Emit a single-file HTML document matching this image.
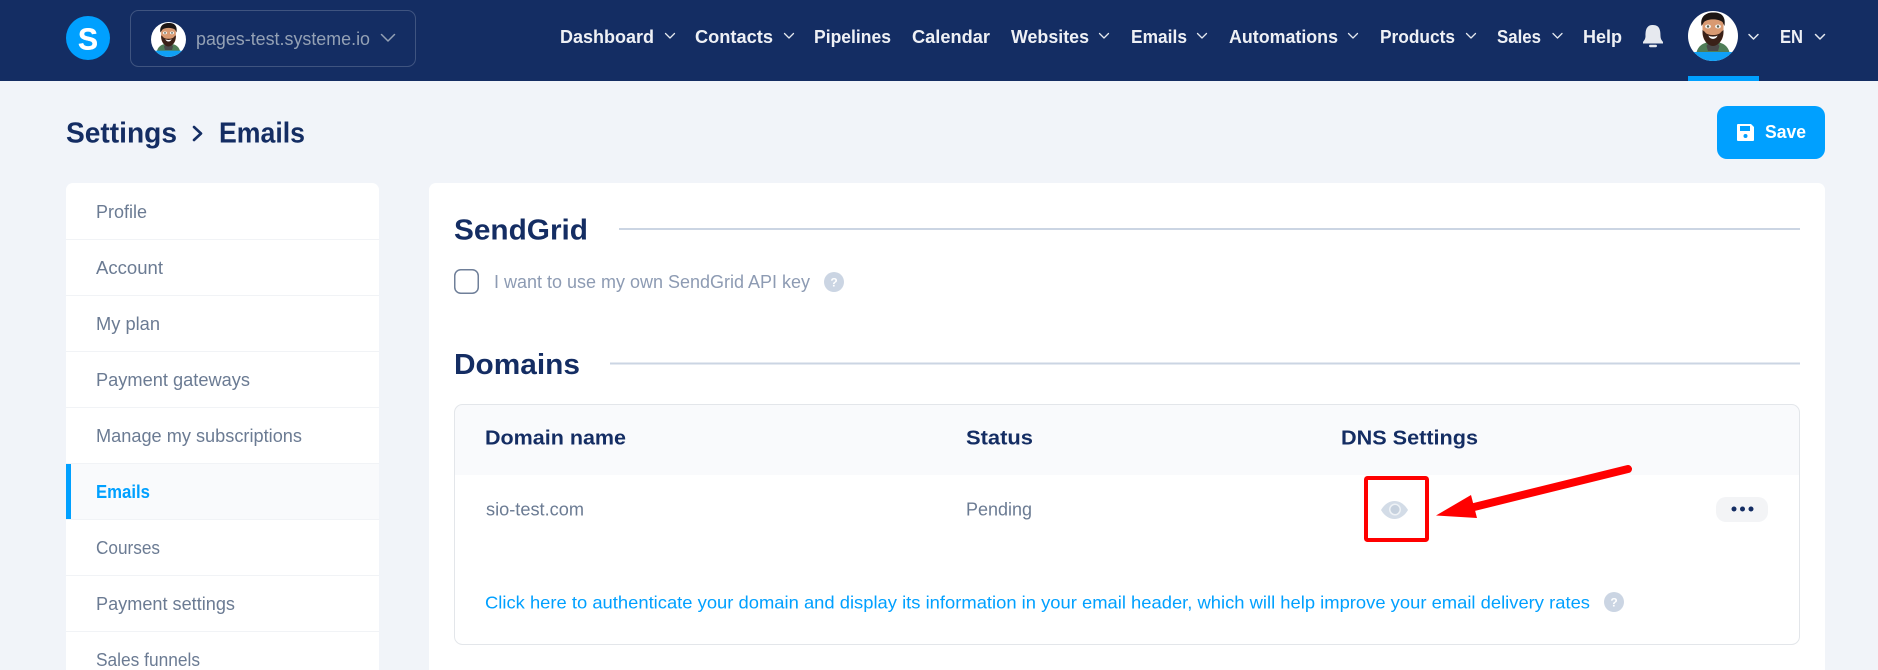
<!DOCTYPE html>
<html lang="en">
<head>
<meta charset="utf-8">
<title>Settings - Emails</title>
<style>
html,body{margin:0;padding:0;width:1878px;height:670px;overflow:hidden;background:#f1f4f9}
svg{display:block}
text{font-family:"Liberation Sans",sans-serif}
.nav{font-size:18px;font-weight:700;fill:#eef0f5}
.side{font-size:18px;fill:#6b7b93}
.h2{font-size:29px;font-weight:700;fill:#142d63}
.th{font-size:20px;font-weight:700;fill:#142d63}
.td{font-size:18px;fill:#6b7b93}
.chev{fill:none;stroke:#e4e8ef;stroke-width:1.300;stroke-linecap:round;stroke-linejoin:round}
</style>
</head>
<body>
<svg width="1878" height="670" viewBox="0 0 1878 670" xmlns="http://www.w3.org/2000/svg">
<defs>
<clipPath id="av"><circle cx="50" cy="50" r="50"/></clipPath>
<symbol id="avatar" viewBox="0 0 100 100">
<g clip-path="url(#av)">
<rect width="100" height="100" fill="#fff"/>
<path d="M16 88 C18 70 30 64 42 62 L58 62 C70 64 82 70 84 88 Z" fill="#4f7d57"/>
<rect x="0" y="82" width="100" height="18" fill="#0fa0f5"/>
<path d="M37 70 C42 60 58 60 63 70 L60 80 L40 80 Z" fill="#4a4a4a"/>
<path d="M29 20 C29 6 71 6 71 20 L71 42 C71 60 60 68 50 68 C40 68 29 60 29 42 Z" fill="#d99a72"/>
<path d="M29 38 L34 42 C38 50 62 50 66 42 L71 38 C72 58 60 70 50 70 C40 70 28 58 29 38 Z" fill="#3a2118"/>
<path d="M27 30 C23 8 40 2 52 3 C66 3 76 10 73 30 L69 22 C60 15 40 15 32 22 Z" fill="#1d1614"/>
<ellipse cx="40" cy="31" rx="6" ry="4" fill="#f3f3f0"/>
<ellipse cx="60" cy="31" rx="6" ry="4" fill="#f3f3f0"/>
<circle cx="40" cy="31" r="2.400" fill="#5a6050"/>
<circle cx="60" cy="31" r="2.400" fill="#5a6050"/>
<path d="M41 49 C45 52 55 52 59 49 C57 58 43 58 41 49 Z" fill="#fff"/>
</g>
</symbol>
</defs>

<!-- page -->
<rect width="1878" height="670" fill="#f1f4f9"/>

<!-- top bar -->
<rect width="1878" height="81" fill="#142d63"/>
<circle cx="88" cy="38" r="22" fill="#00a0ff"/>
<text x="78" y="49.500" font-size="31" font-weight="700" fill="#fff" stroke="#fff" stroke-width="0.400" textLength="20" lengthAdjust="spacingAndGlyphs">S</text>

<rect x="130.500" y="10.500" width="285" height="56" rx="8" fill="none" stroke="#3f5480" stroke-width="1"/>
<use href="#avatar" x="151" y="22" width="35" height="35"/>
<text x="196" y="45" font-size="18" fill="#94a1b5" textLength="174" lengthAdjust="spacingAndGlyphs">pages-test.systeme.io</text>
<polyline points="381.500,34.500 388,41 394.500,34.500" fill="none" stroke="#94a1b5" stroke-width="1.500" stroke-linecap="round" stroke-linejoin="round"/>

<text class="nav" x="560" y="43" textLength="94" lengthAdjust="spacingAndGlyphs">Dashboard</text>
<polyline class="chev" points="665.500,33.500 670,38 674.500,33.500"/>
<text class="nav" x="695" y="43" textLength="78" lengthAdjust="spacingAndGlyphs">Contacts</text>
<polyline class="chev" points="784.500,33.500 789,38 793.500,33.500"/>
<text class="nav" x="814" y="43" textLength="77" lengthAdjust="spacingAndGlyphs">Pipelines</text>
<text class="nav" x="912" y="43" textLength="78" lengthAdjust="spacingAndGlyphs">Calendar</text>
<text class="nav" x="1011" y="43" textLength="78" lengthAdjust="spacingAndGlyphs">Websites</text>
<polyline class="chev" points="1099.500,33.500 1104,38 1108.500,33.500"/>
<text class="nav" x="1131" y="43" textLength="56" lengthAdjust="spacingAndGlyphs">Emails</text>
<polyline class="chev" points="1197.500,33.500 1202,38 1206.500,33.500"/>
<text class="nav" x="1229" y="43" textLength="109" lengthAdjust="spacingAndGlyphs">Automations</text>
<polyline class="chev" points="1348.500,33.500 1353,38 1357.500,33.500"/>
<text class="nav" x="1380" y="43" textLength="75" lengthAdjust="spacingAndGlyphs">Products</text>
<polyline class="chev" points="1466.500,33.500 1471,38 1475.500,33.500"/>
<text class="nav" x="1497" y="43" textLength="44" lengthAdjust="spacingAndGlyphs">Sales</text>
<polyline class="chev" points="1553,33.500 1557.500,38 1562,33.500"/>
<text class="nav" x="1583" y="43" textLength="39" lengthAdjust="spacingAndGlyphs">Help</text>

<path d="M1653 25 C1646 25 1645.500 31 1645.500 36 C1645.500 39 1644 40.500 1643 42 L1643 43.500 L1663 43.500 L1663 42 C1662 40.500 1660.500 39 1660.500 36 C1660.500 31 1660 25 1653 25 Z" fill="#e6e9ef"/>
<rect x="1649" y="44.800" width="8" height="2.400" rx="1.200" fill="#e6e9ef"/>

<use href="#avatar" x="1688" y="11" width="50" height="50"/>
<polyline class="chev" points="1749,34.500 1753.500,39 1758,34.500" style="stroke-width:1.500"/>
<text class="nav" x="1780" y="43" textLength="23" lengthAdjust="spacingAndGlyphs">EN</text>
<polyline class="chev" points="1815.500,34.500 1820,39 1824.500,34.500" style="stroke-width:1.500"/>
<rect x="1688" y="76" width="71" height="5" fill="#00a0ff"/>

<!-- page title -->
<text x="66" y="142.500" font-size="29" font-weight="700" fill="#142d63" textLength="111" lengthAdjust="spacingAndGlyphs">Settings</text>
<polyline points="194,127 201,133.500 194,140" fill="none" stroke="#142d63" stroke-width="2.600" stroke-linecap="round" stroke-linejoin="round"/>
<text x="219" y="142.500" font-size="29" font-weight="700" fill="#142d63" textLength="86" lengthAdjust="spacingAndGlyphs">Emails</text>

<!-- save -->
<rect x="1717" y="106" width="108" height="53" rx="10" fill="#00a0ff"/>
<path d="M1738 124 L1751 124 L1754 127 L1754 140 Q1754 141 1753 141 L1738 141 Q1737 141 1737 140 L1737 125 Q1737 124 1738 124 Z" fill="#fff"/>
<rect x="1740" y="126" width="10" height="5" fill="#00a0ff"/>
<circle cx="1745.500" cy="136" r="2" fill="#00a0ff"/>
<text x="1765" y="138" font-size="18" font-weight="700" fill="#fff" textLength="41" lengthAdjust="spacingAndGlyphs">Save</text>

<!-- sidebar -->
<rect x="66" y="183" width="313" height="520" rx="7" fill="#fff"/>
<rect x="66" y="463" width="313" height="56" fill="#f9fafc"/>
<rect x="66" y="464" width="5" height="55" fill="#00a0ff"/>
<g fill="#f1f3f6">
<rect x="66" y="239" width="313" height="1"/>
<rect x="66" y="295" width="313" height="1"/>
<rect x="66" y="351" width="313" height="1"/>
<rect x="66" y="407" width="313" height="1"/>
<rect x="66" y="463" width="313" height="1"/>
<rect x="66" y="519" width="313" height="1"/>
<rect x="66" y="575" width="313" height="1"/>
<rect x="66" y="631" width="313" height="1"/>
</g>
<text class="side" x="96" y="218" textLength="51" lengthAdjust="spacingAndGlyphs">Profile</text>
<text class="side" x="96" y="274" textLength="67" lengthAdjust="spacingAndGlyphs">Account</text>
<text class="side" x="96" y="330" textLength="64" lengthAdjust="spacingAndGlyphs">My plan</text>
<text class="side" x="96" y="386" textLength="154" lengthAdjust="spacingAndGlyphs">Payment gateways</text>
<text class="side" x="96" y="442" textLength="206" lengthAdjust="spacingAndGlyphs">Manage my subscriptions</text>
<text x="96" y="498" font-size="18" font-weight="700" fill="#00a0ff" textLength="54" lengthAdjust="spacingAndGlyphs">Emails</text>
<text class="side" x="96" y="554" textLength="64" lengthAdjust="spacingAndGlyphs">Courses</text>
<text class="side" x="96" y="610" textLength="139" lengthAdjust="spacingAndGlyphs">Payment settings</text>
<text class="side" x="96" y="666" textLength="104" lengthAdjust="spacingAndGlyphs">Sales funnels</text>

<!-- main card -->
<rect x="429" y="183" width="1396" height="520" rx="7" fill="#fff"/>

<text class="h2" x="454" y="239.500" textLength="134" lengthAdjust="spacingAndGlyphs">SendGrid</text>
<rect x="619" y="228" width="1181" height="2" fill="#cbd5e3"/>
<rect x="454.750" y="269.750" width="23.500" height="23.500" rx="6" fill="#fff" stroke="#6f7f99" stroke-width="1.500"/>
<text x="494" y="288" font-size="18" fill="#8d9bb3" textLength="316" lengthAdjust="spacingAndGlyphs">I want to use my own SendGrid API key</text>
<circle cx="834" cy="282" r="10" fill="#cbd5e3"/>
<text x="834" y="286.500" font-size="12" font-weight="700" fill="#fff" text-anchor="middle">?</text>

<text class="h2" x="454" y="374" textLength="126" lengthAdjust="spacingAndGlyphs">Domains</text>
<rect x="610" y="362.500" width="1190" height="2" fill="#cbd5e3"/>

<!-- table -->
<rect x="454.500" y="404.500" width="1345" height="240" rx="8" fill="#fff"/>
<path d="M462.500 404.500 H1791.500 Q1799.500 404.500 1799.500 412.500 V475 H454.500 V412.500 Q454.500 404.500 462.500 404.500 Z" fill="#f9fafc"/>
<rect x="454.500" y="404.500" width="1345" height="240" rx="8" fill="none" stroke="#e3e6ea" stroke-width="1"/>
<text class="th" x="485" y="444.500" textLength="141" lengthAdjust="spacingAndGlyphs">Domain name</text>
<text class="th" x="966" y="444.500" textLength="67" lengthAdjust="spacingAndGlyphs">Status</text>
<text class="th" x="1341" y="444.500" textLength="137" lengthAdjust="spacingAndGlyphs">DNS Settings</text>

<text class="td" x="486" y="515.500" textLength="98" lengthAdjust="spacingAndGlyphs">sio-test.com</text>
<text class="td" x="966" y="515.500" textLength="66" lengthAdjust="spacingAndGlyphs">Pending</text>

<!-- eye -->
<path d="M1381 510 C1388 498 1401 498 1408 510 C1401 522 1388 522 1381 510 Z" fill="#d3dce7"/>
<circle cx="1395" cy="509.500" r="6" fill="#eef2f6"/>
<circle cx="1395" cy="509.500" r="4.500" fill="#c6d1de"/>

<!-- dots button -->
<rect x="1716" y="497" width="52" height="25" rx="10" fill="#f3f4f6"/>
<circle cx="1734" cy="509" r="2.500" fill="#142d63"/>
<circle cx="1742.500" cy="509" r="2.500" fill="#142d63"/>
<circle cx="1751" cy="509" r="2.500" fill="#142d63"/>

<!-- link -->
<text x="485" y="608.500" font-size="17.500" fill="#00a0ff" textLength="1105" lengthAdjust="spacingAndGlyphs">Click here to authenticate your domain and display its information in your email header, which will help improve your email delivery rates</text>
<circle cx="1614" cy="602" r="10" fill="#cbd5e3"/>
<text x="1614" y="606.500" font-size="12" font-weight="700" fill="#fff" text-anchor="middle">?</text>

<!-- annotation -->
<rect x="1366" y="478" width="61" height="62" rx="1.500" fill="none" stroke="#ff0000" stroke-width="4"/>
<path d="M1628 469 L1470 508" fill="none" stroke="#ff0000" stroke-width="8" stroke-linecap="round"/>
<path d="M1436 515.500 L1471 495 L1477 518 Z" fill="#ff0000"/>
</svg>
</body>
</html>
